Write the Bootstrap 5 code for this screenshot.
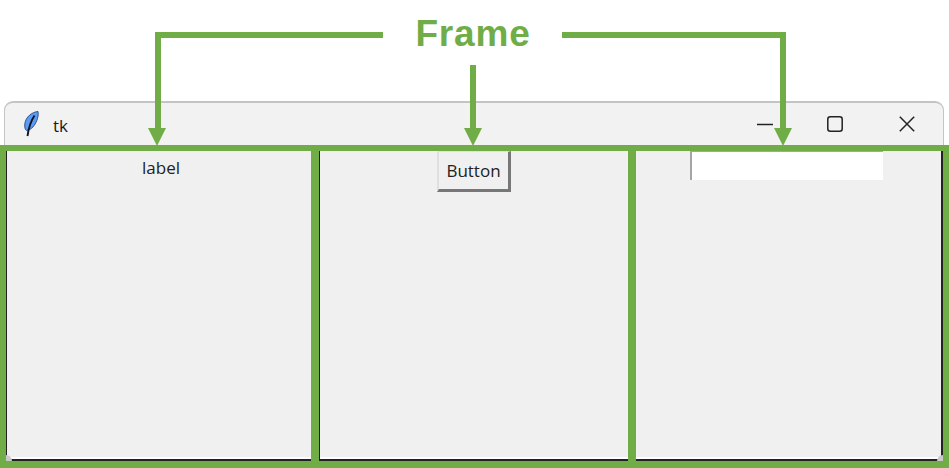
<!DOCTYPE html>
<html lang="en">
<head>
<meta charset="utf-8">
<title>tk</title>
<link href="https://cdn.jsdelivr.net/npm/bootstrap@5.3.0/dist/css/bootstrap.min.css" rel="stylesheet">
<style>
html,body{margin:0;background:#fff;overflow:hidden}
.stage{position:relative;width:949px;height:468px;font-family:"Open Sans","Noto Sans",sans-serif;color:#222}
.head-area{height:101px;padding-top:12px}
.frame-title{font-family:"Liberation Sans",sans-serif;font-weight:700;font-size:37px;line-height:44px;letter-spacing:.8px;color:#70ad47;margin:0 0 0 -3px}
.titlebar{height:44px;margin:0 5px 0 4px;background:#f2f2f2;border:1px solid #c4c4c4;border-top-width:2px;border-bottom:0;border-radius:9px 9px 0 0;padding-left:19px}
.tk-name{font-size:17px;line-height:20px;margin-left:14px;color:#1a1a1a;margin-top:3px}
.ctl-wrap{margin-left:auto;padding-right:28px}
.ctl-a{margin-right:54px}
.ctl-b{margin-right:56px}
.panes{height:323px;background:#70ad47;padding:6px 6px 7px 6px}
.pane{position:relative;background:#f0f0f0;border-left:1px solid #222;border-bottom:2px solid #222;box-shadow:inset 0 -2px 0 #fff;height:100%}
.pane-a{width:305px;margin-right:8px}
.pane-b{width:309px;margin-right:8px}
.pane-c{width:307px;border-left:0;border-right:2px solid #222}
.tk-label{font-size:17px;line-height:22px;margin-top:6px;margin-left:4px;color:#222}
.tk-button{width:74px;height:41px;margin-left:0;padding:0;background:#f0f0f0;border:2px solid;border-width:1px 3px 3px 2px;border-color:#e0e0e0 #777 #777 #e0e0e0;border-radius:0;font-size:17px;line-height:37px;color:#222}
.tk-entry{width:193px;height:29px;padding:0;margin-left:54px;background:#fff;border:0;border-top:1px solid #a5a5a5;border-left:2px solid #a5a5a5;border-radius:0}
.nick{position:absolute;bottom:-2px;width:6px;height:6px;background:#c9c9c9}
.nick-l{left:-1px;border-top-right-radius:6px}
.nick-r{right:-2px;border-top-left-radius:6px}
.arrows{position:absolute;left:0;top:0;pointer-events:none}
</style>
</head>
<body>
<div class="stage d-flex flex-column">
  <div class="head-area d-flex justify-content-center align-items-start">
    <p class="frame-title">Frame</p>
  </div>
  <div class="titlebar d-flex align-items-center">
    <svg width="15" height="26" viewBox="0 0 15 26" aria-hidden="true">
      <path d="M14 .5C8 1 1.500 6 .8 13c-.3 3 .2 6 2 6.500 5-1 8-5 10-10 1.200-3 1.800-6 1.200-9z" fill="#5c9bf0" stroke="#23468a" stroke-width=".9"/>
      <path d="M10.500 4.500C7.500 9 5 14 3.500 25" fill="none" stroke="#0a1429" stroke-width="1.900"/>
    </svg>
    <span class="tk-name">tk</span>
    <div class="d-flex align-items-center ctl-wrap">
      <svg class="ctl-a" width="16" height="16" viewBox="0 0 16 16" aria-hidden="true"><path d="M0 8.500h16" stroke="#222" stroke-width="1.500"/></svg>
      <svg class="ctl-b" width="16" height="16" viewBox="0 0 16 16" aria-hidden="true"><rect x=".8" y=".8" width="14.400" height="14.400" rx="2.500" fill="none" stroke="#222" stroke-width="1.500"/></svg>
      <svg width="16" height="16" viewBox="0 0 16 16" aria-hidden="true"><path d="M.8.800l14.400 14.400M15.200.800L.8 15.200" stroke="#222" stroke-width="1.500"/></svg>
    </div>
  </div>
  <div class="panes d-flex">
    <div class="pane pane-a text-center"><span class="nick nick-l"></span><div class="tk-label">label</div></div>
    <div class="pane pane-b d-flex justify-content-center align-items-start"><button type="button" class="btn tk-button">Button</button></div>
    <div class="pane pane-c"><span class="nick nick-r"></span><input class="form-control tk-entry" type="text" aria-label="entry"></div>
  </div>
  <svg class="arrows" width="949" height="468" viewBox="0 0 949 468" aria-hidden="true">
    <g fill="none" stroke="#70ad47" stroke-width="6">
      <path d="M383 35H158V130"/>
      <path d="M473 65V130"/>
      <path d="M562 35H783V130"/>
    </g>
    <g fill="#70ad47">
      <path d="M148 128h18l-9 18z"/>
      <path d="M464 128h18l-9 18z"/>
      <path d="M774 128h18l-9 18z"/>
    </g>
  </svg>
</div>
<script src="https://cdn.jsdelivr.net/npm/bootstrap@5.3.0/dist/js/bootstrap.bundle.min.js"></script>
</body>
</html>
